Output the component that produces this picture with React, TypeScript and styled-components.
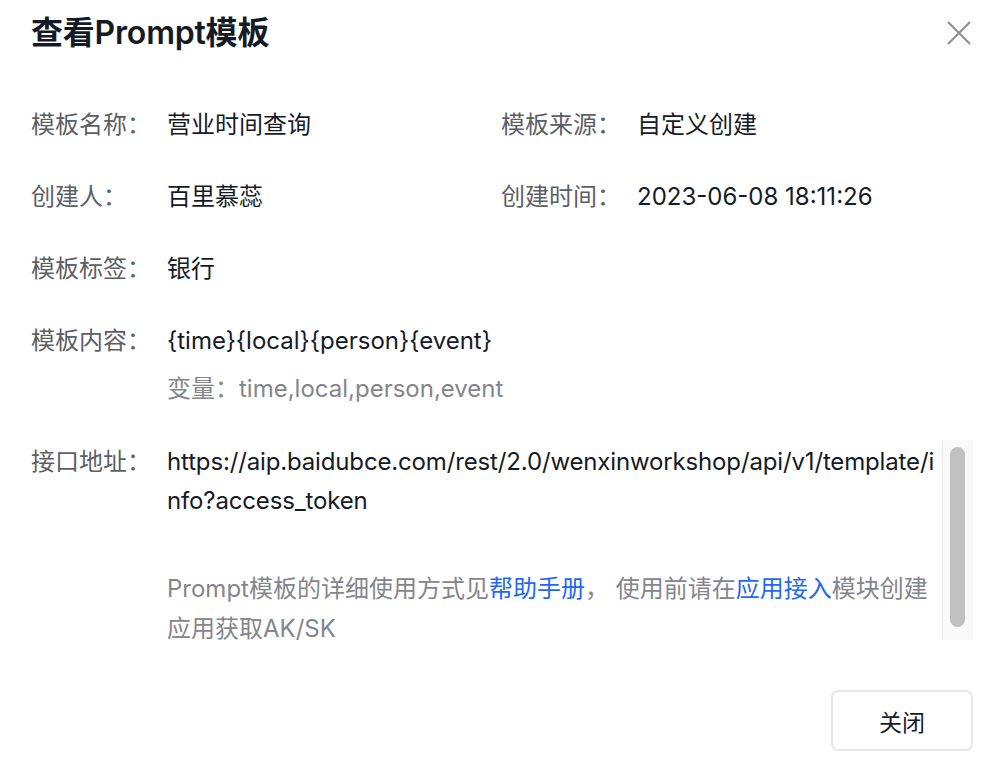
import * as React from 'react';
import styled, { createGlobalStyle } from 'styled-components';

const COLORS = {
  text: '#151b26',
  label: '#5c5f66',
  muted: '#84868c',
  link: '#2468f2',
  border: '#e8e9eb',
};

const GlobalStyle = createGlobalStyle`
  html, body {
    margin: 0;
    padding: 0;
    background: #fff;
  }
  body {
    font-family: Inter, "Noto Sans CJK SC", sans-serif;
    color: ${COLORS.text};
  }
`;

const Modal = styled.div`
  width: 992px;
  height: 766px;
  box-sizing: border-box;
  padding: 14px 19px 0 31px;
  display: flex;
  flex-direction: column;
  background: #fff;
`;

const Header = styled.div`
  display: flex;
  align-items: center;
  justify-content: space-between;
  height: 38px;
`;

const Title = styled.h1`
  margin: 0;
  font-size: 32px;
  line-height: 38px;
  font-weight: 600;
  letter-spacing: -0.2px;
  color: ${COLORS.text};
`;

const CloseButton = styled.button`
  width: 30px;
  height: 30px;
  margin-right: -1px;
  padding: 0;
  border: none;
  background: none;
  display: flex;
  align-items: center;
  justify-content: center;
  cursor: pointer;
`;

const Body = styled.div`
  margin-top: 57px;
  display: flex;
  flex-direction: column;
  gap: 40px;
  font-size: 24px;
  line-height: 32px;
`;

const Row = styled.div`
  display: grid;
  grid-template-columns: 470px 1fr;
`;

const Field = styled.div`
  display: flex;
  align-items: flex-start;
`;

const Label = styled.div`
  width: 136px;
  flex-shrink: 0;
  color: ${COLORS.label};
`;

const Value = styled.div<{ muted?: boolean }>`
  color: ${(p) => (p.muted ? COLORS.muted : COLORS.text)};
`;

const Hint = styled.div`
  color: ${COLORS.muted};
  margin-top: 16px;
`;

const ApiField = styled(Field)`
  margin-top: -5px;
`;

const ApiLabel = styled(Label)`
  padding-top: 2px;
  line-height: 39px;
`;

const ScrollBox = styled.div`
  display: flex;
  height: 200px;
  margin-left: -7px;
`;

const ScrollContent = styled.div`
  width: 775px;
  padding: 2px 0 0 7px;
`;

const ScrollTrack = styled.div`
  width: 30px;
  box-sizing: border-box;
  padding: 7px 6px 0 7px;
  background: #fafafa;
  border-left: 1px solid #ececec;
  border-right: 1px solid #f3f3f3;
`;

const ScrollThumb = styled.div`
  height: 180px;
  border-radius: 8px;
  background: #c1c1c1;
`;

const Url = styled.div`
  height: 117px;
  line-height: 39px;
  white-space: nowrap;
  letter-spacing: -0.15px;
  color: ${COLORS.text};
`;

const UrlLine = styled.div``;

const Help = styled.div`
  width: 772px;
  margin-top: 10px;
  line-height: 40px;
  color: ${COLORS.muted};
`;

const Link = styled.a`
  color: ${COLORS.link};
  text-decoration: none;
`;

const Footer = styled.div`
  margin-top: auto;
  margin-bottom: 15px;
  display: flex;
  justify-content: flex-end;
`;

const Button = styled.button`
  width: 142px;
  height: 61px;
  border: 2px solid #e6e7e9;
  border-radius: 7px;
  background: #fff;
  font-family: Inter, "Noto Sans CJK SC", sans-serif;
  font-size: 23px;
  color: ${COLORS.text};
  cursor: pointer;
`;

const CloseIcon = () => (
  <svg width="24" height="24" viewBox="0 0 24 24">
    <path d="M1 1 L23 23 M23 1 L1 23" stroke="#8a8d94" strokeWidth="2" fill="none" />
  </svg>
);

const App: React.FunctionComponent = () => {
  return (
    <Modal>
      <GlobalStyle />
      <Header>
        <Title>{'查看Prompt模板'}</Title>
        <CloseButton aria-label="close">
          <CloseIcon />
        </CloseButton>
      </Header>

      <Body>
        <Row>
          <Field>
            <Label>{'模板名称：'}</Label>
            <Value>{'营业时间查询'}</Value>
          </Field>
          <Field>
            <Label>{'模板来源：'}</Label>
            <Value>{'自定义创建'}</Value>
          </Field>
        </Row>
        <Row>
          <Field>
            <Label>{'创建人：'}</Label>
            <Value>{'百里慕蕊'}</Value>
          </Field>
          <Field>
            <Label>{'创建时间：'}</Label>
            <Value>{'2023-06-08 18:11:26'}</Value>
          </Field>
        </Row>
        <Row>
          <Field>
            <Label>{'模板标签：'}</Label>
            <Value>{'银行'}</Value>
          </Field>
        </Row>
        <Field>
          <Label>{'模板内容：'}</Label>
          <div>
            <Value>{'{time}{local}{person}{event}'}</Value>
            <Hint>{'变量：time,local,person,event'}</Hint>
          </div>
        </Field>
        <ApiField>
          <ApiLabel>{'接口地址：'}</ApiLabel>
          <ScrollBox>
            <ScrollContent>
              <Url>
                <UrlLine>{'https://aip.baidubce.com/rest/2.0/wenxinworkshop/api/v1/template/i'}</UrlLine>
                <UrlLine>{'nfo?access_token'}</UrlLine>
              </Url>
              <Help>
                {'Prompt模板的详细使用方式见'}
                <Link href="#">{'帮助手册'}</Link>
                {'，  使用前请在'}
                <Link href="#">{'应用接入'}</Link>
                {'模块创建应用获取AK/SK'}
              </Help>
            </ScrollContent>
            <ScrollTrack>
              <ScrollThumb />
            </ScrollTrack>
          </ScrollBox>
        </ApiField>
      </Body>

      <Footer>
        <Button>{'关闭'}</Button>
      </Footer>
    </Modal>
  );
};

export default App;
